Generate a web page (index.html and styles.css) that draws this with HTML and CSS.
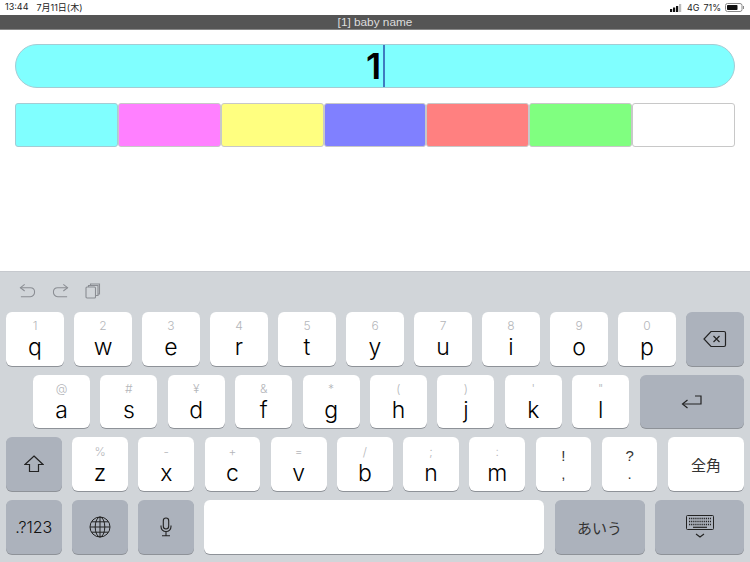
FILE: index.html
```html
<!DOCTYPE html>
<html lang="ja">
<head>
    <meta charset="UTF-8">
    <title>baby name</title>
    <link rel="stylesheet" href="styles.css">
</head>
<body>
    <div class="status-bar">
        <div class="status-left"><span>13:44</span><span>7月11日(木)</span></div>
        <div class="status-right">
            <svg class="signal" width="13" height="8" viewBox="0 0 13 8">
                <rect x="0" y="5" width="2.2" height="3" fill="#111"/>
                <rect x="3" y="3.5" width="2.2" height="4.5" fill="#111"/>
                <rect x="6" y="2" width="2.2" height="6" fill="#111"/>
                <rect x="9" y="0" width="2.2" height="8" fill="#bbb"/>
            </svg>
            <span>4G</span>
            <span>71%</span>
            <svg width="20" height="9" viewBox="0 0 20 9">
                <rect x="0.5" y="0.5" width="16.5" height="8" rx="2" fill="none" stroke="#888"/>
                <rect x="2" y="2" width="10.5" height="5" rx="0.8" fill="#111"/>
                <rect x="18" y="3" width="1" height="3" fill="#888"/>
            </svg>
        </div>
    </div>
    <div class="title-bar">[1] baby name</div>

    <main class="content">
        <div class="name-field">
            <span class="name-value">1</span>
            <span class="caret"></span>
        </div>
        <div class="palette">
            <div class="swatch cyan"></div>
            <div class="swatch pink"></div>
            <div class="swatch yellow"></div>
            <div class="swatch blue"></div>
            <div class="swatch red"></div>
            <div class="swatch green"></div>
            <div class="swatch white"></div>
        </div>
    </main>

    <section class="keyboard">
        <div class="toolbar">
            <svg width="17" height="16" viewBox="0 0 18 16" fill="none" stroke="#8a8d93" stroke-width="1.1">
                <path d="M6 1 L1.5 4.5 L6 8"/>
                <path d="M1.5 4.5 H12 C15 4.5 16.5 6.5 16.5 9 C16.5 11.5 15 14 12 14 H2"/>
            </svg>
            <svg width="17" height="16" viewBox="0 0 18 16" fill="none" stroke="#8a8d93" stroke-width="1.1">
                <path d="M12 1 L16.5 4.5 L12 8"/>
                <path d="M16.5 4.5 H6 C3 4.5 1.5 6.5 1.5 9 C1.5 11.5 3 14 6 14 H16"/>
            </svg>
            <svg width="16" height="16" viewBox="0 0 16 16" fill="none" stroke="#8a8d93" stroke-width="1.1">
                <rect x="1" y="4" width="9.5" height="11" rx="1"/>
                <path d="M3.5 4 V2.5 H13 V12.5 H10.5"/>
                <path d="M5.5 2.5 V1 H14.5 V11 H13"/>
            </svg>
        </div>

        <div class="key-row">
            <div class="key"><span class="hint">1</span><span class="letter">q</span></div>
            <div class="key"><span class="hint">2</span><span class="letter">w</span></div>
            <div class="key"><span class="hint">3</span><span class="letter">e</span></div>
            <div class="key"><span class="hint">4</span><span class="letter">r</span></div>
            <div class="key"><span class="hint">5</span><span class="letter">t</span></div>
            <div class="key"><span class="hint">6</span><span class="letter">y</span></div>
            <div class="key"><span class="hint">7</span><span class="letter">u</span></div>
            <div class="key"><span class="hint">8</span><span class="letter">i</span></div>
            <div class="key"><span class="hint">9</span><span class="letter">o</span></div>
            <div class="key"><span class="hint">0</span><span class="letter">p</span></div>
            <div class="key fn">
                <svg width="24" height="18" viewBox="0 0 24 18" fill="none" stroke="#222" stroke-width="1.2">
                    <path d="M8 1.5 H21 C22 1.5 22.5 2 22.5 3 V15 C22.5 16 22 16.5 21 16.5 H8 L1 9 Z"/>
                    <path d="M10.5 6 L16.5 12 M16.5 6 L10.5 12"/>
                </svg>
            </div>
        </div>

        <div class="key-row row-home">
            <div class="key"><span class="hint">@</span><span class="letter">a</span></div>
            <div class="key"><span class="hint">#</span><span class="letter">s</span></div>
            <div class="key"><span class="hint">¥</span><span class="letter">d</span></div>
            <div class="key"><span class="hint">&amp;</span><span class="letter">f</span></div>
            <div class="key"><span class="hint">*</span><span class="letter">g</span></div>
            <div class="key"><span class="hint">(</span><span class="letter">h</span></div>
            <div class="key"><span class="hint">)</span><span class="letter">j</span></div>
            <div class="key"><span class="hint">'</span><span class="letter">k</span></div>
            <div class="key"><span class="hint">"</span><span class="letter">l</span></div>
            <div class="key fn key-return">
                <svg width="22" height="14" viewBox="0 0 22 14" fill="none" stroke="#222" stroke-width="1.2">
                    <path d="M14 1 H20 V9 H2"/>
                    <path d="M6.5 5 L1.5 9 L6.5 13"/>
                </svg>
            </div>
        </div>

        <div class="key-row row-lower">
            <div class="key fn">
                <svg width="20" height="18" viewBox="0 0 20 18" fill="none" stroke="#222" stroke-width="1.2">
                    <path d="M10 1 L19 9.5 H14.5 V16.5 H5.5 V9.5 H1 Z"/>
                </svg>
            </div>
            <div class="key"><span class="hint">%</span><span class="letter">z</span></div>
            <div class="key"><span class="hint">-</span><span class="letter">x</span></div>
            <div class="key"><span class="hint">+</span><span class="letter">c</span></div>
            <div class="key"><span class="hint">=</span><span class="letter">v</span></div>
            <div class="key"><span class="hint">/</span><span class="letter">b</span></div>
            <div class="key"><span class="hint">;</span><span class="letter">n</span></div>
            <div class="key"><span class="hint">:</span><span class="letter">m</span></div>
            <div class="key punct"><span>!</span><span>,</span></div>
            <div class="key punct"><span>?</span><span>.</span></div>
            <div class="key label key-wide">全角</div>
        </div>

        <div class="key-row row-bottom">
            <div class="key fn label numbers">.?123</div>
            <div class="key fn">
                <svg width="22" height="22" viewBox="0 0 22 22" fill="none" stroke="#222" stroke-width="1">
                    <circle cx="11" cy="11" r="10"/>
                    <ellipse cx="11" cy="11" rx="4.8" ry="10"/>
                    <path d="M11 1 V21 M1 11 H21 M2.6 5.8 H19.4 M2.6 16.2 H19.4"/>
                </svg>
            </div>
            <div class="key fn">
                <svg width="12" height="20" viewBox="0 0 12 20" fill="none" stroke="#222" stroke-width="1.1">
                    <rect x="3.3" y="1" width="5.4" height="11" rx="2.7"/>
                    <path d="M1 8.5 V9.5 C1 12.5 3 14.5 6 14.5 C9 14.5 11 12.5 11 9.5 V8.5 M6 14.5 V18.5 M2 18.8 H10"/>
                </svg>
            </div>
            <div class="key key-space"></div>
            <div class="key fn label key-kana">あいう</div>
            <div class="key fn key-hide">
                <svg width="28" height="24" viewBox="0 0 28 24" fill="none" stroke="#222">
                    <rect x="0.5" y="0.5" width="27" height="14" rx="1"/>
                    <path d="M3 3.5 H25 M3 6.5 H25 M3 9.5 H25" stroke-dasharray="1.2 0.9" stroke-width="1.6"/>
                    <path d="M7 12.3 H21" stroke-width="1.2"/>
                    <path d="M10 19 L14 22 L18 19" stroke-width="1.1"/>
                </svg>
            </div>
        </div>
    </section>
</body>
</html>
```

FILE: styles.css
```css
:root {
    --key: #ffffff;
    --key-fn: #acb2bc;
    --kb-bg: #d1d5d9;
    --key-shadow: #8e9298;
}

* {
    box-sizing: border-box;
    margin: 0;
    padding: 0;
}

body {
    width: 750px;
    height: 562px;
    overflow: hidden;
    background-color: #ffffff;
    font-family: 'Inter', 'Noto Sans CJK JP', sans-serif;
    display: flex;
    flex-direction: column;
}

.status-bar {
    height: 15px;
    padding: 0 5px;
    display: flex;
    justify-content: space-between;
    align-items: center;
    font-size: 9px;
    color: #222;
}

.status-left {
    display: flex;
    gap: 8px;
}

.status-right {
    display: flex;
    align-items: center;
    gap: 4px;
}

.title-bar {
    height: 15px;
    background-color: #555555;
    border-bottom: 1px solid #888888;
    color: #dddddd;
    font-family: 'Liberation Sans', sans-serif;
    font-size: 11.8px;
    line-height: 14px;
    text-align: center;
}

.content {
    flex: 1;
    padding: 14px 15px 0;
}

.name-field {
    height: 44px;
    background-color: #80ffff;
    border: 1px solid #a4ccd4;
    border-radius: 22px;
    display: flex;
    justify-content: center;
    gap: 2px;
    margin-bottom: 15px;
    padding-left: 1px;
}

.name-value {
    font-size: 36px;
    font-weight: 600;
    line-height: 42px;
    color: #000000;
}

.caret {
    width: 2px;
    background-color: #3f7cc0;
}

.palette {
    display: flex;
    height: 44px;
}

.swatch {
    flex: 1;
    border: 1px solid #c8c8c8;
    border-radius: 3px;
}

.cyan { background-color: #80ffff; border-color: #a4ccd4; }
.pink { background-color: #ff80ff; }
.yellow { background-color: #ffff80; }
.blue { background-color: #8080ff; }
.red { background-color: #ff8080; }
.green { background-color: #80ff80; }
.white { background-color: #ffffff; }

.keyboard {
    height: 291px;
    background-color: var(--kb-bg);
    padding: 0 6px 8px;
    display: flex;
    flex-direction: column;
    gap: 9px;
    border-top: 1px solid #c6c9ce;
}

.toolbar {
    height: 31px;
    padding: 8px 13px 0;
    display: flex;
    align-items: center;
    gap: 16px;
}

.key-row {
    display: flex;
    height: 54px;
    gap: 10px;
}

.key {
    flex: 1;
    min-width: 0;
    background-color: var(--key);
    border-radius: 6px;
    box-shadow: 0 1px 0 var(--key-shadow);
    display: flex;
    flex-direction: column;
    align-items: center;
    justify-content: center;
    color: #000000;
}

.fn {
    background-color: var(--key-fn);
}

.hint {
    font-size: 12px;
    font-weight: 300;
    line-height: 14px;
    margin-top: 4px;
    color: #b4b6ba;
}

.letter {
    font-size: 23px;
    font-weight: 300;
    line-height: 28px;
    height: 29px;
}

.row-home {
    padding-left: 27px;
    gap: 10.4px;
}

.row-home .key {
    flex: 0 0 57px;
}

.row-home .key-return {
    flex: 1;
}

.row-lower {
    gap: 10.4px;
}

.row-lower .key {
    flex: 0 0 55.8px;
}

.row-lower .hint {
    margin-top: 5px;
}

.row-lower .key-wide {
    flex: 1;
}

.row-bottom {
    gap: 10.5px;
}

.row-bottom .key {
    flex: 0 0 55.5px;
}

.row-bottom .key-space {
    flex: 0 0 340px;
}

.row-bottom .key-kana {
    flex: 0 0 90px;
}

.row-bottom .key-hide {
    flex: 1;
}

.row-lower .punct {
    font-family: 'Liberation Sans', sans-serif;
    font-size: 15px;
    line-height: 17.5px;
    padding-top: 1px;
    color: #333;
}

.label {
    font-size: 15px;
    color: #333;
}

.numbers {
    font-size: 16px;
    font-weight: 300;
    color: #111;
}
```
